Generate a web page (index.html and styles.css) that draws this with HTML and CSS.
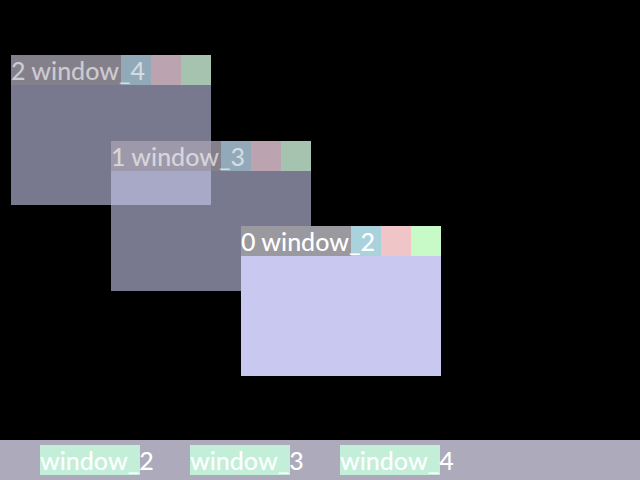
FILE: index.html
```html
<!DOCTYPE html>
<html lang="en">
<head>
<meta charset="utf-8">
<title>Desktop</title>
<link rel="stylesheet" href="styles.css">
</head>
<body>
<main class="desktop">
<section class="window window-4">
<header class="titlebar"><h2 class="title">2 window_4</h2><button class="control minimize" aria-label="Minimize"></button><button class="control maximize" aria-label="Maximize"></button><button class="control close" aria-label="Close"></button></header>
</section>
<section class="window window-3">
<header class="titlebar"><h2 class="title">1 window_3</h2><button class="control minimize" aria-label="Minimize"></button><button class="control maximize" aria-label="Maximize"></button><button class="control close" aria-label="Close"></button></header>
</section>
<section class="window window-2 active">
<header class="titlebar"><h2 class="title">0 window_2</h2><button class="control minimize" aria-label="Minimize"></button><button class="control maximize" aria-label="Maximize"></button><button class="control close" aria-label="Close"></button></header>
</section>
</main>
<nav class="taskbar" aria-label="Taskbar">
<button class="task">window_2</button>
<button class="task">window_3</button>
<button class="task">window_4</button>
</nav>
</body>
</html>
```
FILE: styles.css
```css
* { box-sizing: border-box; }
body {
  margin: 0;
  min-height: 100vh;
  display: flex;
  flex-direction: column;
  background: #000;
  color: #fff;
  font: 500 25px/30px Lato, "Liberation Sans", sans-serif;
}
button { border: 0; padding: 0; font: inherit; color: inherit; }
.desktop { position: relative; flex: 1; overflow: hidden; }
.window {
  position: absolute;
  width: 200px;
  height: 150px;
  background: rgba(200, 200, 237, 0.6);
  color: rgba(255, 255, 255, 0.6);
}
.window-4 { left: 11px; top: 55px; }
.window-3 { left: 111px; top: 141px; }
.window-2 { left: 241px; top: 226px; }
.titlebar { display: flex; height: 30px; isolation: isolate; }
.title {
  position: relative;
  flex: 1;
  min-width: 0;
  margin: 0;
  font: inherit;
  white-space: nowrap;
  background: rgba(144, 135, 135, 0.45);
}
/* Long titles run over the controls */
.control { position: relative; z-index: -1; width: 30px; height: 30px; }
.minimize { background: #91a9b9; }
.maximize { background: #bba3af; }
.close { background: #a5c3af; }
.active { background: #c8c8f0; color: #fff; }
.active .title { background: #9a999f; }
.active .minimize { background: #aad2dc; }
.active .maximize { background: #f0c5c8; }
.active .close { background: #c8fac8; }
.taskbar {
  display: flex;
  gap: 50px;
  height: 40px;
  padding: 5px 40px;
  background: #adabbb;
}
.task {
  width: 100px;
  height: 30px;
  text-align: left;
  white-space: nowrap;
  background: #c3efd9;
}
```
